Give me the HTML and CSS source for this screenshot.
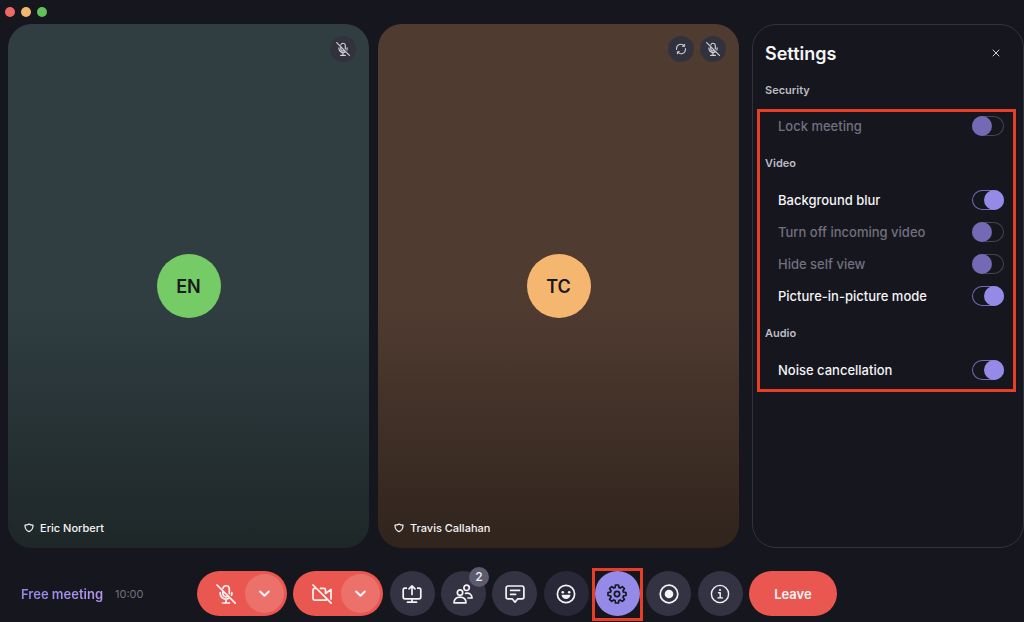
FILE: index.html
```html
<!DOCTYPE html>
<html lang="en">
<head>
<meta charset="utf-8">
<title>Meeting</title>
<link rel="stylesheet" href="styles.css">
</head>
<body>
<svg class="sprite" aria-hidden="true">
  <symbol id="mic-off" viewBox="0 0 20 20">
    <path d="M1 1l18.200 18.200M6.800 7v2.500a3.300 3.300 0 0 0 5 2.800M7 4.200a3.200 3.200 0 0 1 6.300.5v5M4.200 8.500v.8a5.800 5.800 0 0 0 9.300 4.600M15.900 8.500v.8q0 1-.4 2M10 15.200v3.800M6.500 19h7"/>
  </symbol>
  <symbol id="shield" viewBox="0 0 10 10">
    <path d="M5 1C4 1.800 2.600 2.100 1 2.100C.8 5.400 2.200 7.600 5 8.600C7.800 7.600 9.200 5.400 9 2.100C7.400 2.100 6 1.800 5 1z"/>
  </symbol>
  <symbol id="chevron" viewBox="0 0 12 12"><path d="M2 4.200l4 3.800 4-3.800"/></symbol>
</svg>
<div class="app">
  <header class="titlebar"><span class="dot dot-close"></span><span class="dot dot-min"></span><span class="dot dot-max"></span></header>
  <main class="stage">
    <section class="tile tile-teal" aria-label="Eric Norbert">
      <div class="tile-actions">
        <button class="mini" aria-label="Muted"><svg class="icon"><use href="#mic-off"/></svg></button>
      </div>
      <div class="avatar avatar-green">EN</div>
      <div class="name"><svg class="icon shield"><use href="#shield"/></svg>Eric Norbert</div>
    </section>
    <section class="tile tile-brown" aria-label="Travis Callahan">
      <div class="tile-actions">
        <button class="mini" aria-label="Switch"><svg class="icon sync" viewBox="0 0 20 20"><path d="M2.500 11V9.500A7.300 7.300 0 0 1 15.500 5M17.500 9v1.500A7.300 7.300 0 0 1 4.500 15M12.500 5.500h3.500V2M7.500 14.500H4V18"/></svg></button>
        <button class="mini" aria-label="Muted"><svg class="icon"><use href="#mic-off"/></svg></button>
      </div>
      <div class="avatar avatar-orange">TC</div>
      <div class="name"><svg class="icon shield"><use href="#shield"/></svg>Travis Callahan</div>
    </section>
    <aside class="settings">
      <div class="settings-head">
        <h1 class="settings-title">Settings</h1>
        <button class="close" aria-label="Close"><svg class="icon" viewBox="0 0 10 10"><path d="M2 2l6 6M8 2l-6 6"/></svg></button>
      </div>
      <h2 class="group group-first">Security</h2>
      <div class="options">
        <div class="row row-off"><label for="lock">Lock meeting</label><input class="toggle" type="checkbox" id="lock" disabled></div>
        <h2 class="group">Video</h2>
        <div class="row"><label for="blur">Background blur</label><input class="toggle" type="checkbox" id="blur" checked></div>
        <div class="row row-off"><label for="incoming">Turn off incoming video</label><input class="toggle" type="checkbox" id="incoming" disabled></div>
        <div class="row row-off"><label for="selfview">Hide self view</label><input class="toggle" type="checkbox" id="selfview" disabled></div>
        <div class="row"><label for="pip">Picture-in-picture mode</label><input class="toggle" type="checkbox" id="pip" checked></div>
        <h2 class="group">Audio</h2>
        <div class="row"><label for="noise">Noise cancellation</label><input class="toggle" type="checkbox" id="noise" checked></div>
      </div>
    </aside>
  </main>
  <footer class="bar">
    <div class="status"><span class="plan">Free meeting</span><span class="timer">10:00</span></div>
    <div class="controls">
      <div class="split">
        <button class="split-main" aria-label="Unmute"><svg class="icon"><use href="#mic-off"/></svg></button>
        <button class="split-more" aria-label="Microphone options"><svg class="icon"><use href="#chevron"/></svg></button>
      </div>
      <div class="split">
        <button class="split-main" aria-label="Start video"><svg class="icon" viewBox="0 0 20 20"><path d="M1 1l18.200 18.200M4 4.400H2.600A1.600 1.600 0 0 0 1 6v8.600a1.600 1.600 0 0 0 1.600 1.600H14M8.500 4.400h3.400A1.600 1.600 0 0 1 13.500 6v3.500l5.500-4V15"/></svg></button>
        <button class="split-more" aria-label="Camera options"><svg class="icon"><use href="#chevron"/></svg></button>
      </div>
      <button class="round" aria-label="Share screen"><svg class="icon" viewBox="0 0 20 20"><path d="M4.300 4.200H3A1.800 1.800 0 0 0 1.200 6v7A1.800 1.800 0 0 0 3 14.800h14a1.800 1.800 0 0 0 1.800-1.800V6A1.800 1.800 0 0 0 17 4.200h-1.300M10 10.500V2M7 4.800L10 1.800l3 3M10 14.800V18M5.500 18.200h9"/></svg></button>
      <button class="round" aria-label="Participants"><svg class="icon" viewBox="0 0 20 20"><circle cx="7" cy="8.600" r="2.700"/><path d="M1 18.800c0-3.700 2.300-5.700 6-5.700s6 2 6 5.700zM12.600 9.300c3.900-.6 6.400 1.300 6.400 4.700h-4"/><circle cx="13.600" cy="3.800" r="2.700"/></svg><span class="badge">2</span></button>
      <button class="round" aria-label="Chat"><svg class="icon" viewBox="0 0 20 20"><path d="M3 2h14a1.900 1.900 0 0 1 1.900 1.900v9A1.900 1.900 0 0 1 17 14.800h-4.200L10 18.200l-2.800-3.400H3a1.900 1.900 0 0 1-1.900-1.900v-9A1.900 1.900 0 0 1 3 2zM5.600 6.300h9M5.600 10.300h5"/></svg></button>
      <button class="round round-dim" aria-label="Reactions"><svg class="icon" viewBox="0 0 20 20"><circle cx="10" cy="10" r="8.600"/><g class="solid"><circle cx="6.800" cy="8.200" r="1.300"/><circle cx="13.200" cy="8.200" r="1.300"/><path d="M5.600 10.700h8.800a4.400 4.400 0 0 1-8.800 0z"/></g></svg></button>
      <button class="round round-active" aria-label="Settings"><svg class="icon" viewBox="-10 -10 20 20"><path d="M-1.900-6.500L-1.500-9H1.500L1.900-6.500L3.250-5.940L5.300-7.420L7.420-5.300L5.940-3.250L6.500-1.900L9-1.500V1.500L6.500 1.900L5.940 3.250L7.420 5.300L5.300 7.420L3.250 5.940L1.900 6.500L1.500 9H-1.500L-1.900 6.500L-3.250 5.940L-5.300 7.420L-7.420 5.300L-5.940 3.250L-6.500 1.900L-9 1.500V-1.500L-6.500-1.900L-5.940-3.250L-7.420-5.300L-5.300-7.420L-3.250-5.940z"/><circle r="2.600"/></svg></button>
      <button class="round" aria-label="Record"><svg class="icon" viewBox="0 0 20 20"><circle cx="10" cy="10" r="8.800"/><circle class="solid" cx="10" cy="10" r="4.300"/></svg></button>
      <button class="round" aria-label="Meeting info"><svg class="icon thin" viewBox="0 0 20 20"><circle cx="10" cy="10" r="8.600"/><path d="M8.500 8.800H10.200V13.800M8 13.900h4.400"/><circle class="solid" cx="10" cy="6" r="1.100"/></svg></button>
      <button class="leave">Leave</button>
    </div>
  </footer>
</div>
</body>
</html>
```

FILE: styles.css
```css
* { box-sizing: border-box; }
body {
  margin: 0;
  background: #16161e;
  color: #f4f4f6;
  font-family: Inter, "Liberation Sans", sans-serif;
}
button {
  display: flex;
  align-items: center;
  justify-content: center;
  padding: 0;
  border: 0;
  color: inherit;
  font: inherit;
  cursor: pointer;
}
.sprite { position: absolute; width: 0; height: 0; }
.icon {
  width: 20px;
  height: 20px;
  fill: none;
  stroke: currentColor;
  stroke-width: 1.7;
  stroke-linecap: round;
  stroke-linejoin: round;
}
.icon .solid { fill: currentColor; stroke: none; }
.thin { stroke-width: 1.4; }
.app { display: flex; flex-direction: column; min-height: 100vh; }

.titlebar { display: flex; align-items: center; gap: 6px; height: 24px; padding-left: 5px; }
.dot { width: 10px; height: 10px; border-radius: 50%; }
.dot-close { background: #ed6a62; }
.dot-min { background: #f4b66d; }
.dot-max { background: #62c158; }

.stage { display: flex; flex: 1; }
.tile {
  position: relative;
  display: flex;
  flex: 1;
  align-items: center;
  justify-content: center;
  border-radius: 24px;
}
.tile-teal { margin-left: 8px; background: linear-gradient(#303e42 53%, #1e2728); }
.tile-brown { margin-left: 9px; background: linear-gradient(#503b31 53%, #30241d); }
.tile-actions { position: absolute; top: 12px; right: 13px; display: flex; gap: 6px; }
.mini { width: 26px; height: 26px; border-radius: 50%; background: #32323f; color: #d0d0d6; }
.mini .icon { width: 14px; height: 14px; }
.mini .sync { width: 12px; height: 12px; }
.avatar {
  display: flex;
  align-items: center;
  justify-content: center;
  width: 64px;
  height: 64px;
  border-radius: 50%;
  color: #191922;
  font-size: 18px;
  font-weight: 600;
}
.avatar-green { background: #75cb65; }
.avatar-orange { background: #f5b66f; }
.name {
  position: absolute;
  bottom: 12px;
  left: 16px;
  display: flex;
  align-items: center;
  gap: 6px;
  font-size: 11px;
  line-height: 16px;
  font-weight: 500;
}
.shield { width: 10px; height: 10px; stroke-width: 1.2; }

.settings {
  width: 272px;
  margin-left: 13px;
  padding: 11px 19px 0 12px;
  border: 1px solid #32323f;
  border-radius: 24px;
}
.settings-head { display: flex; align-items: center; justify-content: space-between; height: 34px; }
.settings-title { margin: 0; font-size: 18px; font-weight: 600; }
.close { width: 16px; height: 16px; background: none; color: #d0d0d6; }
.close .icon { width: 10px; height: 10px; stroke-width: 1; }
.group { margin: 0; color: #bcbcc4; font-size: 11px; line-height: 42px; font-weight: 600; }
.group-first { line-height: 40px; }
.options { position: relative; }
.options::after {
  content: "";
  position: absolute;
  inset: -1px -12px -6px -8px;
  border: 3px solid #e83e26;
  pointer-events: none;
}
.row {
  display: flex;
  align-items: center;
  justify-content: space-between;
  height: 32px;
  padding-left: 13px;
  font-size: 13px;
  font-weight: 500;
}
.row-off { color: #72707f; }
.toggle {
  display: flex;
  width: 32px;
  height: 20px;
  margin: 0;
  border-radius: 10px;
  box-shadow: inset 0 0 0 1px #454453;
  appearance: none;
}
.toggle::before { content: ""; width: 20px; height: 20px; border-radius: 50%; background: #7469b4; }
.toggle:checked { justify-content: flex-end; box-shadow: inset 0 0 0 1px #7469b4; }
.toggle:checked::before { background: #968ae8; }

.bar { display: flex; align-items: center; padding: 23px 16px 6px 21px; }
.status { display: flex; align-items: center; gap: 12px; width: 176px; }
.plan {
  background: linear-gradient(90deg, #9187ea, #b797ee);
  background-clip: text;
  color: transparent;
  font-size: 13px;
  font-weight: 600;
}
.timer { color: #72707f; font-size: 11px; }
.controls { display: flex; align-items: center; justify-content: space-between; width: 640px; }
.split {
  display: flex;
  align-items: center;
  width: 90px;
  height: 45px;
  padding-right: 3px;
  border-radius: 23px;
  background: #ea5750;
}
.split-main { flex: 1; height: 45px; padding-left: 9px; border-radius: 23px; background: none; }
.split-more { width: 39px; height: 39px; border-radius: 50%; background: #ec716b; }
.split-more .icon { width: 13px; height: 13px; stroke-width: 2; }
.round { position: relative; width: 45px; height: 45px; border-radius: 50%; background: #343344; }
.round-dim { background: #282839; }
.round-active { background: #968ae8; color: #191922; }
.round-active::after {
  content: "";
  position: absolute;
  inset: -3px -3px -5px;
  border: 3px solid #e83e26;
}
.badge {
  position: absolute;
  top: -4px;
  right: -3px;
  width: 20px;
  border-radius: 50%;
  background: #5b5a6e;
  font-size: 12px;
  line-height: 20px;
  font-weight: 500;
}
.leave {
  width: 88px;
  height: 45px;
  border-radius: 23px;
  background: #ea5750;
  font-size: 13px;
  font-weight: 600;
}
```
